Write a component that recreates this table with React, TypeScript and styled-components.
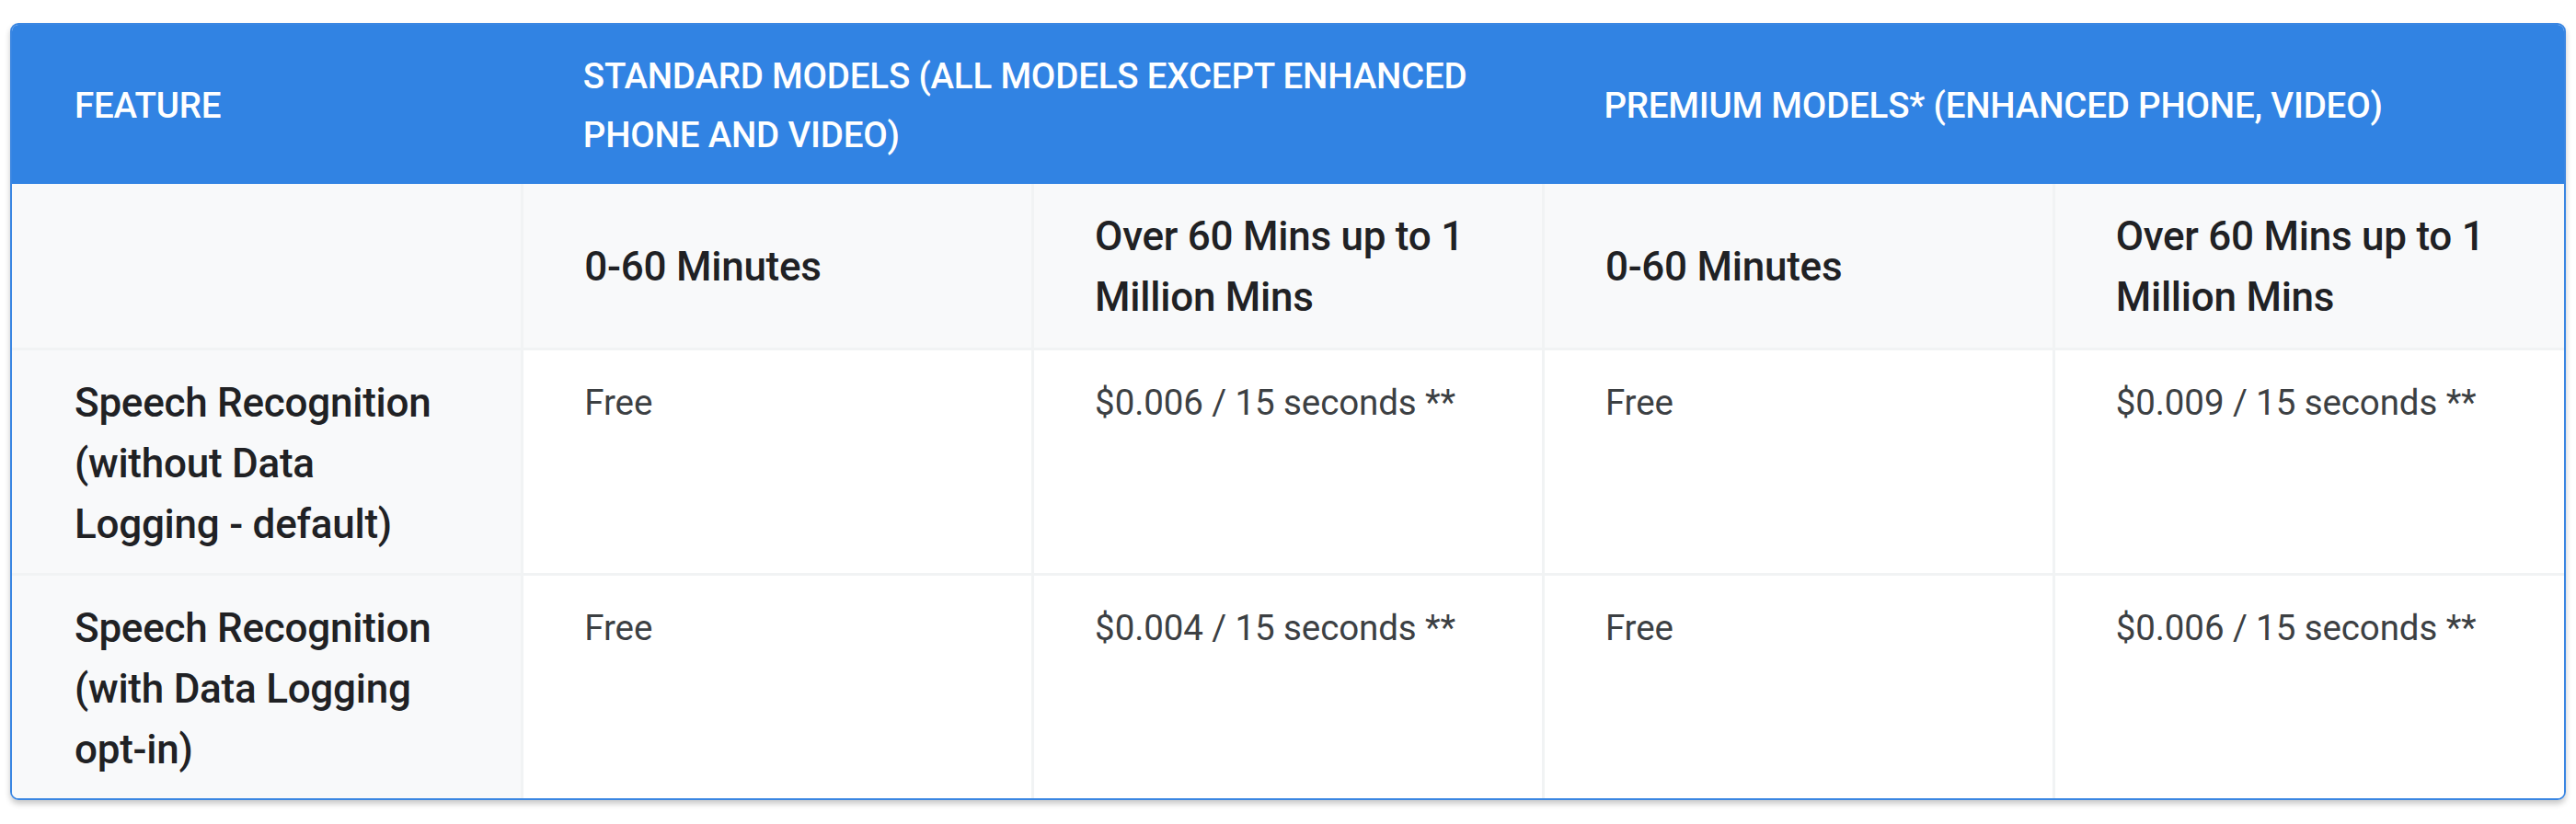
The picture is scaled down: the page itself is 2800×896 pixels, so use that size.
import React from 'react'
import styled, { createGlobalStyle, css } from 'styled-components'

const GlobalStyle = createGlobalStyle`
  html, body {
    margin: 0;
    padding: 0;
    background: #ffffff;
    font-family: Roboto, 'Noto Sans', Arial, sans-serif;
  }
`

const Page = styled.div`
  padding: 25px 11px 20px 11px;
`

const Frame = styled.div`
  border: 2px solid #3a86e2;
  border-radius: 9px;
  overflow: hidden;
  box-shadow: 0 4px 6px rgba(0, 0, 0, 0.22);
`

const Table = styled.table`
  width: 100%;
  table-layout: fixed;
  border-collapse: collapse;
  border-spacing: 0;
`

const HeadCell = styled.th`
  background: #3183e3;
  color: #ffffff;
  font-size: 38.5px;
  font-weight: 500;
  line-height: 64px;
  letter-spacing: -0.2px;
  text-transform: uppercase;
  text-align: left;
  vertical-align: middle;
  padding: 24px 66px 21px 66px;
  &:first-child {
    padding-left: 68px;
  }
`

const SubCell = styled.th<{ $blank?: boolean }>`
  background: #f8f9fa;
  color: #202124;
  font-size: 44px;
  font-weight: 500;
  line-height: 66px;
  letter-spacing: -0.25px;
  text-align: left;
  vertical-align: middle;
  padding: 24px 66px 22px 66px;
  border-left: 3px solid #f1f3f4;
  border-bottom: 3px solid #f1f3f4;
  &:first-child {
    border-left: none;
  }
`

const RowHead = styled.th`
  background: #f8f9fa;
  color: #202124;
  font-size: 44px;
  font-weight: 500;
  line-height: 66px;
  letter-spacing: -0.25px;
  text-align: left;
  vertical-align: top;
  padding: 24px 66px 20px 68px;
`

const Cell = styled.td<{ $last?: boolean }>`
  background: #ffffff;
  color: #3c4043;
  font-size: 38.5px;
  font-weight: 400;
  line-height: 66px;
  letter-spacing: -0.1px;
  vertical-align: top;
  padding: 24px 66px 20px 66px;
  border-left: 3px solid #f1f3f4;
  ${(p) =>
    p.$last &&
    css`
      padding-bottom: 32px;
    `}
`

const Row = styled.tr<{ $divider?: boolean }>`
  ${(p) =>
    p.$divider &&
    css`
      border-bottom: 3px solid #f1f3f4;
    `}
`

const rows = [
  {
    feature: 'Speech Recognition (without Data Logging - default)',
    prices: ['Free', '$0.006 / 15 seconds **', 'Free', '$0.009 / 15 seconds **'],
  },
  {
    feature: 'Speech Recognition (with Data Logging opt-in)',
    prices: ['Free', '$0.004 / 15 seconds **', 'Free', '$0.006 / 15 seconds **'],
  },
]

const tiers = ['0-60 Minutes', 'Over 60 Mins up to 1 Million Mins']

export default function App() {
  return (
    <>
      <GlobalStyle />
      <Page>
        <Frame>
          <Table>
            <thead>
              <tr>
                <HeadCell>Feature</HeadCell>
                <HeadCell colSpan={2}>
                  Standard models (all models except Enhanced phone and video)
                </HeadCell>
                <HeadCell colSpan={2}>
                  Premium models* (Enhanced phone, video)
                </HeadCell>
              </tr>
            </thead>
            <tbody>
              <tr>
                <SubCell $blank />
                {[...tiers, ...tiers].map((t, i) => (
                  <SubCell key={i}>{t}</SubCell>
                ))}
              </tr>
              {rows.map((r, ri) => (
                <Row key={ri} $divider={ri < rows.length - 1}>
                  <RowHead>{r.feature}</RowHead>
                  {r.prices.map((p, pi) => (
                    <Cell key={pi} $last={ri === rows.length - 1}>
                      {p}
                    </Cell>
                  ))}
                </Row>
              ))}
            </tbody>
          </Table>
        </Frame>
      </Page>
    </>
  )
}
